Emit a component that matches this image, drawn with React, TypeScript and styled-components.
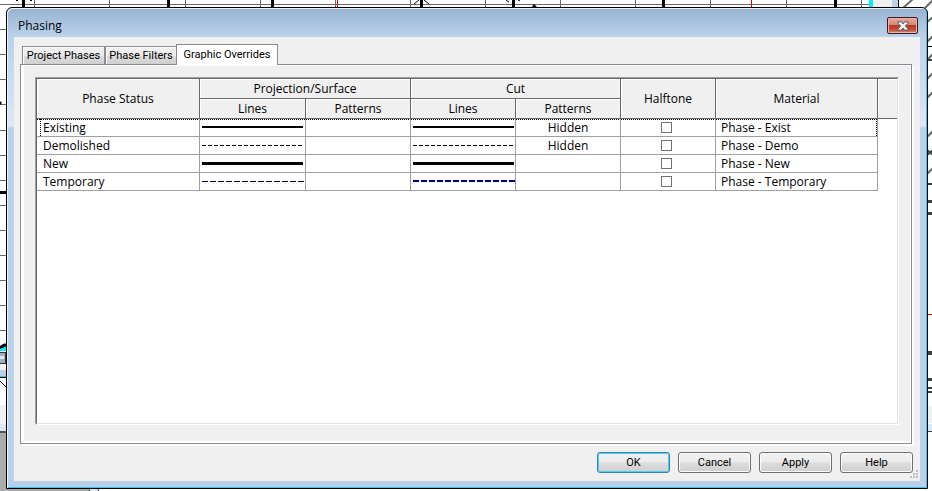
import React, { useState } from "react";
import styled, { createGlobalStyle, css } from "styled-components";

const GlobalStyle = createGlobalStyle`
  * { box-sizing: border-box; }
  html, body { margin: 0; padding: 0; }
  body { font: 12px/16px "Open Sans", "Noto Sans", sans-serif; color: #000; overflow: hidden; }
  button { font: inherit; color: inherit; }
`;

const Page = styled.div`
  position: relative;
  display: flex;
  height: 100vh;
  padding: 7px 4px 2px 6px;
  background: #fff;
`;

const Backdrop = styled.svg`
  position: absolute;
  inset: 0;
  width: 100%;
  height: 100%;
`;

const Dialog = styled.section`
  position: relative;
  flex: 1;
  display: flex;
  flex-direction: column;
  min-width: 0;
  padding: 0 7px 7px;
  border: 1px solid #000;
  border-radius: 6px 6px 0 0;
  background:
    linear-gradient(#98b2d1, #b9d1ea 28px, #dce8f6 118px, #b9d1ea 120px);
  box-shadow: inset 1px 1px 0 #eaf2fa, inset -1px -1px 0 #35c4ea;
`;

const TitleBar = styled.header`
  display: flex;
  flex: none;
  justify-content: space-between;
  height: 29px;
  padding: 9px 2px 0 4px;
`;

const Title = styled.h1`
  margin: 0;
  font: inherit;
  line-height: 18px;
`;

const CloseButton = styled.button`
  display: flex;
  align-items: center;
  justify-content: center;
  width: 31px;
  height: 17px;
  padding: 0;
  border: 1px solid #431422;
  border-radius: 2px;
  background: linear-gradient(#e6a99e, #d68375 48%, #b83a25 50%, #c04a33 75%, #d98a75);
  box-shadow: inset 0 0 0 1px #e9b5a9;
`;

const Client = styled.div`
  position: relative;
  flex: 1;
  display: flex;
  flex-direction: column;
  min-height: 0;
  padding: 7px 8px 8px 6px;
  background: #f0f0f0;
`;

const TabList = styled.div`
  display: flex;
  align-items: flex-end;
  height: 21px;
  margin-bottom: -1px;
  padding-left: 2px;
  z-index: 1;
`;

const controlFont = css`
  font: 11px/14px Roboto, "Open Sans", sans-serif;
  white-space: nowrap;
`;

const Tab = styled.button<{ $active: boolean; $width: number }>`
  ${controlFont}
  width: ${(p) => p.$width}px;
  height: ${(p) => (p.$active ? 21 : 19)}px;
  margin-left: ${(p) => (p.$active ? -1 : 0)}px;
  padding: 0;
  border: 1px solid #898c95;
  border-bottom: ${(p) => (p.$active ? "0" : "1px solid #898c95")};
  background: ${(p) => (p.$active ? "#fff" : "linear-gradient(#f2f2f2, #ebebeb 50%, #dddddd 52%, #cfcfcf)")};
  box-shadow: ${(p) => (p.$active ? "none" : "inset 1px 1px 0 #fafafa")};
`;

const Panel = styled.div`
  flex: 1;
  display: flex;
  min-height: 0;
  padding: 12px 12px 18px 14px;
  border: 1px solid #898c95;
  box-shadow: inset 3px 1px 0 #fff, inset -1px -2px 0 #fff, 2px 2px 0 #fff;
`;

const GridFrame = styled.div`
  flex: 1;
  min-width: 0;
  border: 1px solid;
  border-color: #a0a0a0 #fff #fff #a0a0a0;
`;

const GridInner = styled.div`
  height: 100%;
  overflow: hidden;
  border: 1px solid;
  border-color: #696969 #e3e3e3 #e3e3e3 #696969;
  background: #fff;
`;

const Grid = styled.table`
  width: 100%;
  table-layout: fixed;
  border-collapse: separate;
  border-spacing: 0;
`;

const Col = styled.col<{ $width?: number }>`
  width: ${(p) => (p.$width ? `${p.$width}px` : "auto")};
`;

const HeadCell = styled.th<{ $last?: boolean }>`
  height: 20px;
  padding: 0;
  border-bottom: 1px solid #696969;
  border-right: ${(p) => (p.$last ? "0" : "1px solid #696969")};
  background: #f0f0f0;
  box-shadow: inset 1px 1px 0 #fff;
  font-weight: normal;
`;

const dots = (angle: string) =>
  `repeating-linear-gradient(${angle}, #000 0 1px, transparent 1px 2px)`;

const Cell = styled.td<{ $align?: "center"; $focus?: boolean; $indent?: number }>`
  height: 18px;
  padding: 0 0 0 ${(p) => p.$indent ?? 0}px;
  border-right: 1px solid #a0a0a0;
  border-bottom: 1px solid #a0a0a0;
  line-height: 17px;
  text-align: ${(p) => p.$align ?? "left"};
  ${(p) =>
    p.$focus &&
    css`
      background: ${dots("90deg")} 0 0 / 100% 1px no-repeat;
      &:first-child {
        background:
          ${dots("90deg")} 0 0 / 100% 1px no-repeat,
          ${dots("180deg")} 3px 0 / 1px 100% no-repeat;
      }
      &:nth-child(7) {
        background:
          ${dots("90deg")} 0 0 / 100% 1px no-repeat,
          ${dots("180deg")} 100% 0 / 1px 100% no-repeat;
      }
    `}
`;

const EmptyCell = styled.td`
  padding: 0;
`;

const Sample = styled.svg`
  display: block;
  width: 100%;
  height: 17px;
`;

const Check = styled.input`
  appearance: none;
  display: block;
  width: 11px;
  height: 11px;
  margin: 0 0 0 40px;
  border: 1px solid #707070;
  background: #fff;
  &:checked { background: #707070; box-shadow: inset 0 0 0 2px #fff; }
`;

const ButtonRow = styled.footer`
  display: flex;
  flex: none;
  justify-content: flex-end;
  gap: 8px;
  margin: 8px -1px 0 0;
`;

const PushButton = styled.button<{ $primary?: boolean }>`
  ${controlFont}
  width: 73px;
  height: 21px;
  padding: 0;
  border: 1px solid ${(p) => (p.$primary ? "#3c7fb1" : "#707070")};
  border-radius: 3px;
  background: linear-gradient(#f2f2f2, #ebebeb 49%, #dddddd 51%, #cfcfcf);
  box-shadow: inset 0 0 0 1px ${(p) => (p.$primary ? "#48d0f8" : "#fbfbfb")};
`;

const Grip = styled.svg`
  position: absolute;
  right: 1px;
  bottom: 2px;
`;

type LineStyle = { weight: number; dash?: string; color?: string; end?: number };

const solid: LineStyle = { weight: 2 };
const thick: LineStyle = { weight: 3 };
const dashed: LineStyle = { weight: 1, dash: "4 2" };

type Phase = { name: string; projection: LineStyle; cut: LineStyle; pattern: string; material: string };

const phases: Phase[] = [
  { name: "Existing", projection: solid, cut: solid, pattern: "Hidden", material: "Phase - Exist" },
  { name: "Demolished", projection: dashed, cut: dashed, pattern: "Hidden", material: "Phase - Demo" },
  { name: "New", projection: thick, cut: thick, pattern: "", material: "Phase - New" },
  {
    name: "Temporary",
    projection: { weight: 1, dash: "6 2", color: "#00004c", end: 104 },
    cut: { weight: 2, dash: "6 2", color: "#000080", end: 104 },
    pattern: "",
    material: "Phase - Temporary",
  },
];

function LineSample({ line }: { line: LineStyle }) {
  const y = line.weight === 2 ? 8 : 8.5;
  return (
    <Sample aria-hidden="true" shapeRendering="crispEdges">
      <line
        x1={2}
        x2={line.end ?? 103}
        y1={y}
        y2={y}
        stroke={line.color ?? "#000"}
        strokeWidth={line.weight}
        strokeDasharray={line.dash}
      />
    </Sample>
  );
}

const bars = (xs: number[], w: number, fill: string) =>
  xs.map((x) => <rect key={x} x={x} y={0} width={w} height={8} fill={fill} />);

function Drawing() {
  return (
    <Backdrop viewBox="0 0 932 491" preserveAspectRatio="none" aria-hidden="true">
      <g shapeRendering="crispEdges">
        <rect x={0} y={4} width={869} height={1} fill="#696969" />
        {bars([34, 109, 185, 260, 335, 410, 485, 560, 635, 710, 786, 861], 1, "#696969")}
        {bars([22, 167, 271, 420, 512, 662, 834], 3, "#000")}
        {bars([337, 751], 1, "#e00000")}
        <rect x={869} width={4} height={14} fill="#00f0ff" />
        <rect x={873} width={19} height={14} fill="#f0f0f0" />
        <rect x={892} width={6} height={14} fill="#b9d1ea" />
        <rect x={898} width={1} height={14} fill="#000" />
        {[29, 54, 79, 104, 130, 155, 180, 205, 230, 255, 280, 305, 330].map((y) => (
          <rect key={y} x={0} y={y} width={7} height={1} fill="#696969" />
        ))}
        <rect x={0} y={191} width={7} height={3} fill="#000" />
        <rect x={0} y={347} width={7} height={4} fill="#00f0ff" />
        <rect x={0} y={351} width={7} height={20} fill="#f0f0f0" />
        <rect x={-1} y={352} width={6} height={11} fill="#a3adb8" stroke="#303840" />
        <rect x={0} y={356} width={4} height={3} fill="#dfe5ec" />
        <rect x={0} y={370} width={7} height={6} fill="#b9d1ea" />
        <rect x={0} y={376} width={7} height={1} fill="#35c4ea" />
        <rect x={0} y={377} width={7} height={1} fill="#000" />
        <rect x={0} y={405} width={7} height={19} fill="#f0f0f0" />
        <rect x={0} y={424} width={7} height={7} fill="#dce8f6" />
        <rect x={0} y={431} width={7} height={2} fill="#505050" />
        <rect x={0} y={433} width={90} height={58} fill="#ababab" />
        <rect x={89} y={489} width={10} height={2} fill="#dce8f6" />
        <rect x={89} y={489} width={1} height={2} fill="#505050" />
        <rect x={98} y={489} width={1} height={2} fill="#505050" />
      </g>
      <path d="M0 101l2 2-2 2zM0 346l3-2 4-1v3l-7 3z" fill="#000" />
      <path d="M0 381l7 7M414 4l5-4M424 0l5 4M506 0l3 2M518 0l2 1" stroke="#000" fill="none" />
      <path d="M532 7l2-3 3 3zM16 0h2v1h-2zM30 0h2v1h-2z" fill="#000" />
      <path
        d="M903 8l10-9M925 8l8-8M927 22l6-5M927 42l6-6M927 60l6-6M927 79l6-6M927 98l6-6M927 137l6-6M927 174l6-6"
        stroke="#696969"
        strokeWidth={2}
      />
      <path d="M927 150l6 5M927 155l6-5" stroke="#404040" strokeWidth={2} />
      <g shapeRendering="crispEdges" fill="#404040">
        <rect x={927} y={46} width={5} height={1} fill="#000" />
        <rect x={927} y={59} width={5} height={2} />
        <rect x={927} y={183} width={5} height={2} />
        <rect x={927} y={200} width={5} height={3} />
        <rect x={927} y={212} width={5} height={3} />
        <rect x={927} y={314} width={5} height={1} fill="#e00000" />
        <rect x={927} y={351} width={5} height={4} />
        <rect x={927} y={378} width={5} height={3} />
        <rect x={927} y={387} width={5} height={2} />
        <rect x={927} y={391} width={5} height={2} />
        <rect x={927} y={406} width={5} height={17} fill="#f0f0f0" />
        <rect x={927} y={424} width={5} height={7} fill="#dce8f6" />
        <rect x={927} y={431} width={5} height={1} />
      </g>
    </Backdrop>
  );
}

const tabs = [
  { label: "Project Phases", width: 83 },
  { label: "Phase Filters", width: 72 },
  { label: "Graphic Overrides", width: 102 },
];

export default function App() {
  const [tab, setTab] = useState("Graphic Overrides");
  return (
    <>
      <GlobalStyle />
      <Page>
        <Drawing />
        <Dialog role="dialog" aria-labelledby="dialog-title">
          <TitleBar>
            <Title id="dialog-title">Phasing</Title>
            <CloseButton aria-label="Close">
              <svg width="12" height="10" viewBox="0 0 12 10" aria-hidden="true">
                <path
                  d="M1 .8h3.2L6 2.9 7.8.8H11v1.4L8.4 5 11 7.8v1.4H7.8L6 7.1 4.2 9.2H1V7.8L3.6 5 1 2.2z"
                  fill="#f6f6f6"
                  stroke="#535666"
                />
              </svg>
            </CloseButton>
          </TitleBar>
          <Client>
            <TabList role="tablist">
              {tabs.map((t) => (
                <Tab
                  key={t.label}
                  role="tab"
                  aria-selected={tab === t.label}
                  $active={tab === t.label}
                  $width={t.width}
                  onClick={() => setTab(t.label)}
                >
                  {t.label}
                </Tab>
              ))}
            </TabList>
            <Panel role="tabpanel" aria-label={tab}>
              <GridFrame>
                <GridInner>
                  <Grid>
                    <colgroup>
                      {[163, 106, 105, 105, 105, 95, 162].map((w, i) => (
                        <Col key={i} $width={w} />
                      ))}
                      <Col />
                    </colgroup>
                    <thead>
                      <tr>
                        <HeadCell rowSpan={2}>Phase Status</HeadCell>
                        <HeadCell colSpan={2}>Projection/Surface</HeadCell>
                        <HeadCell colSpan={2}>Cut</HeadCell>
                        <HeadCell rowSpan={2}>Halftone</HeadCell>
                        <HeadCell rowSpan={2}>Material</HeadCell>
                        <HeadCell rowSpan={2} $last />
                      </tr>
                      <tr>
                        <HeadCell>Lines</HeadCell>
                        <HeadCell>Patterns</HeadCell>
                        <HeadCell>Lines</HeadCell>
                        <HeadCell>Patterns</HeadCell>
                      </tr>
                    </thead>
                    <tbody>
                      {phases.map((p, i) => (
                        <tr key={p.name}>
                          <Cell $focus={i === 0} $indent={6}>{p.name}</Cell>
                          <Cell $focus={i === 0}><LineSample line={p.projection} /></Cell>
                          <Cell $focus={i === 0} />
                          <Cell $focus={i === 0}><LineSample line={p.cut} /></Cell>
                          <Cell $focus={i === 0} $align="center">{p.pattern}</Cell>
                          <Cell $focus={i === 0}>
                            <Check type="checkbox" aria-label={`${p.name} halftone`} />
                          </Cell>
                          <Cell $focus={i === 0} $indent={5}>{p.material}</Cell>
                          <EmptyCell />
                        </tr>
                      ))}
                    </tbody>
                  </Grid>
                </GridInner>
              </GridFrame>
            </Panel>
            <ButtonRow>
              <PushButton $primary>OK</PushButton>
              <PushButton>Cancel</PushButton>
              <PushButton>Apply</PushButton>
              <PushButton>Help</PushButton>
            </ButtonRow>
            <Grip width="9" height="9" viewBox="0 0 9 9" aria-hidden="true" shapeRendering="crispEdges">
              <path d="M6 0h2v2H6zM3 3h2v2H3zM6 3h2v2H6zM0 6h2v2H0zM3 6h2v2H3zM6 6h2v2H6z" fill="#bfbfbf" />
            </Grip>
          </Client>
        </Dialog>
      </Page>
    </>
  );
}
